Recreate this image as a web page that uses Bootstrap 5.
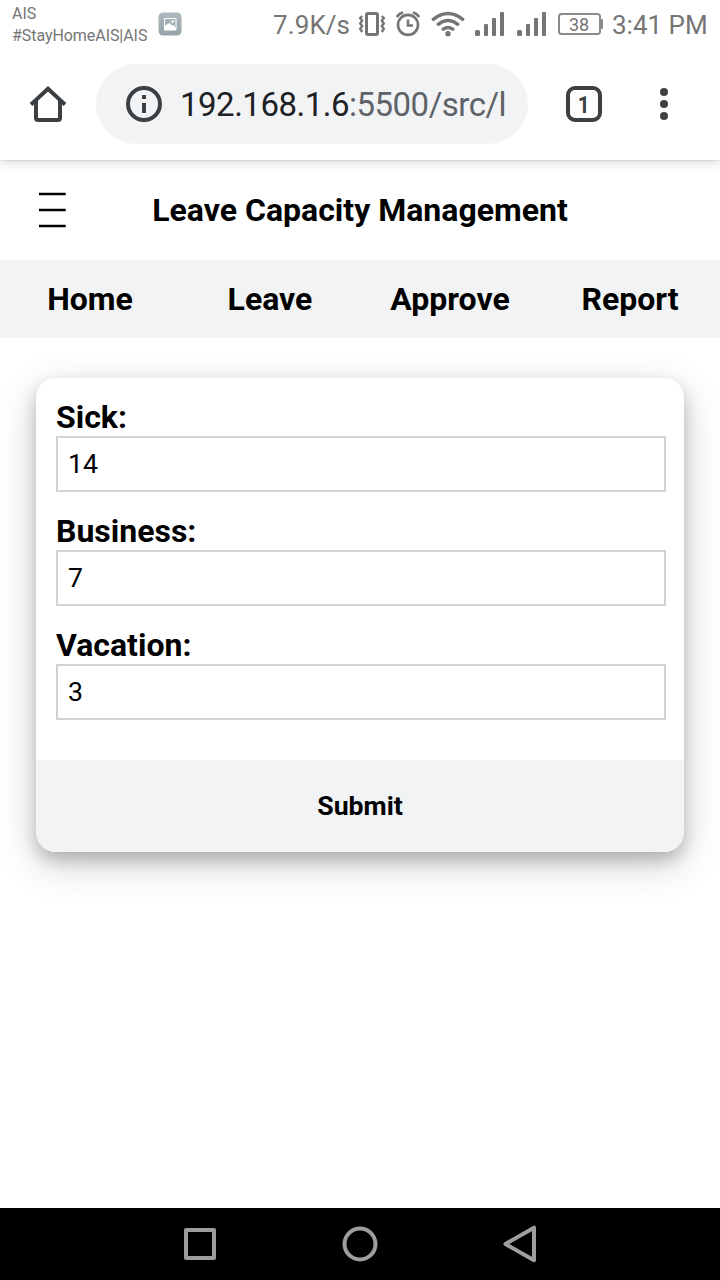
<!DOCTYPE html>
<html lang="en">
<head>
<meta charset="utf-8">
<meta name="viewport" content="width=device-width, initial-scale=1">
<title>Leave Capacity Management</title>
<link href="https://cdn.jsdelivr.net/npm/bootstrap@5.3.0/dist/css/bootstrap.min.css" rel="stylesheet">
<style>
body{font-family:Roboto,"Noto Sans",sans-serif;color:#000;background:#fff;height:1280px;overflow:hidden}
svg{display:block;flex:none}
.status{height:48px;color:#757575}
.carrier{width:146px;padding-left:12px;font-size:16px;letter-spacing:-.06px;line-height:22px;padding-top:3px;white-space:nowrap}
.speed{width:77px;margin-left:91px;font-size:26px;letter-spacing:.1px;line-height:50px;white-space:nowrap}
.clock{font-size:26px;line-height:50px;margin-left:8px;white-space:nowrap}
.toolbar{height:112px;box-shadow:0 1px 12px rgba(0,0,0,.2),0 0 2px rgba(0,0,0,.2);z-index:2;background:#fff;color:#3c4043}
.toolbar-top{z-index:3;background:#fff}
.address{width:432px;height:80px;background:#f1f3f4;font-size:33px;letter-spacing:-.5px;color:#5f6368;padding-left:30px}
.address b{font-weight:400;color:#202124}
.address span{margin-left:18px;width:330px;white-space:nowrap;overflow:hidden;line-height:48px;padding-top:2px}
.tabs{width:36px;height:36px;border:4px solid #3c4043;border-radius:9px;font-size:23px;font-weight:700;line-height:1;padding-top:2px}
.tabs span{transform:scaleX(.9)}
.title-row{height:100px;padding-left:38px}
.title-row h1{font-size:32px;font-weight:700;left:0;right:0}
.menu-row{height:78px;background:#f1f3f4;font-size:32px;font-weight:700}
.menu-row a{color:#000}
.panel{margin:40px 36px 0;height:474px;border-radius:20px;background:#fff;box-shadow:0 8px 16px rgba(0,0,0,.2),0 12px 40px rgba(0,0,0,.19)}
.fields{height:382px;padding:20px 18px 0 20px}
.fields label{display:block;font-size:32px;font-weight:700;line-height:38px}
.fields input{display:block;width:100%;height:56px;border:2px solid #d3d3d3;padding:0 10px;font-size:26.67px;color:#000;margin-bottom:20px;outline:0;background:#fff;border-radius:0}
.submit{height:92px;border:0;background:#f1f3f4;font-size:26.67px;font-weight:700;color:#000}
.softkeys{height:72px;background:#000;padding:0 120px}
</style>
</head>
<body class="d-flex flex-column">
<div class="toolbar-top status d-flex position-relative">
  <div class="carrier"><div>AIS</div><div>#StayHomeAIS|AIS</div></div>
  <svg width="24" height="24" viewBox="0 0 24 24" style="margin:12px 0 0 12px"><defs><linearGradient id="g" x2="0" y2="1"><stop stop-color="#aeb8be"/><stop offset="1" stop-color="#98a3aa"/></linearGradient></defs><rect x=".5" y=".5" width="23" height="23" rx="4.5" fill="url(#g)"/><path d="M6.500 6.500h11.500v11.500H6.500z" fill="none" stroke="#fff" stroke-width="1"/><path d="M6.500 14l2.500-1.500 2.500-1.500 2.500 2.500 1.500-.5 2.500 3v2h-11.500z" fill="#fff"/><path d="M14.700 8v3.200M13.100 9.600h3.200" stroke="#fff"/></svg>
  <div class="speed">7.9K/s</div>
  <svg width="28" height="48" viewBox="0 0 28 48" fill="none" stroke="#757575" style="margin-left:8px"><rect x="8.500" y="13.500" width="11" height="21" rx="1.500" stroke-width="3"/><path d="M4.200 16l-2 2 2 2.700-2 2.700 2 2.700-2 2.700 2 3.200M23.800 16l2 2-2 2.700 2 2.700-2 2.700 2 2.700-2 3.200" stroke-width="2.400"/></svg>
  <svg width="26" height="48" viewBox="0 0 26 48" fill="none" stroke="#757575" stroke-width="2.600" style="margin-left:9px"><circle cx="13" cy="24.900" r="10"/><path d="M13 19.500V25.500h5M1.800 17q2-3.500 6.200-4.800M24.200 17q-2-3.500-6.200-4.800"/></svg>
  <svg width="34" height="48" viewBox="0 0 34 48" fill="none" stroke="#757575" stroke-width="3.400" stroke-linecap="round" style="margin-left:10px"><path d="M2.300 19.300q14.700-11.800 29.400 0M7.300 24.300q9.700-7.600 19.400 0M12.200 29.200q4.800-3.400 9.600 0"/><circle cx="17" cy="33.800" r="2.700" fill="#757575" stroke="none"/></svg>
  <svg width="30" height="48" viewBox="0 0 30 48" fill="#757575" style="margin-left:10px"><rect y="30" width="5" height="6" rx="1.500"/><rect x="9" y="24" width="4" height="12" rx="1"/><rect x="17" y="18" width="4" height="18" rx="1"/><rect x="25" y="12" width="4" height="24" rx="1"/></svg>
  <svg width="30" height="48" viewBox="0 0 30 48" fill="#757575" style="margin-left:12px"><rect y="30" width="5" height="6" rx="1.500"/><rect x="9" y="24" width="4" height="12" rx="1"/><rect x="17" y="18" width="4" height="18" rx="1"/><rect x="25" y="12" width="4" height="24" rx="1"/></svg>
  <svg width="46" height="48" viewBox="0 0 46 48" style="margin-left:11px"><rect x="1" y="14" width="41" height="20" rx="2.500" fill="none" stroke="#8b8b8b" stroke-width="2"/><path d="M43 19h2v10h-2z" fill="#8b8b8b"/><text x="21" y="31" text-anchor="middle" font-size="18" fill="#757575">38</text></svg>
  <div class="clock">3:41 PM</div>
</div>
<div class="toolbar d-flex align-items-center position-relative">
  <svg width="36" height="36" viewBox="0 0 36 36" fill="none" stroke="#3c4043" stroke-width="4" style="margin-left:30px"><path d="M1 18.500L18 2.800l17 15.700M6 15v17q0 2 2 2h20q2 0 2-2V15"/></svg>
  <div class="address rounded-pill d-flex align-items-center" style="margin-left:30px">
    <svg width="36" height="36" viewBox="0 0 36 36"><circle cx="18" cy="18" r="16" fill="none" stroke="#3c4043" stroke-width="4"/><path d="M16 9h4v4h-4zM16 17h4v10h-4z" fill="#3c4043"/></svg>
    <span><b>192.168.1.6</b>:5500/src/l</span>
  </div>
  <div class="tabs d-flex align-items-center justify-content-center" style="margin-left:38px"><span>1</span></div>
  <svg width="8" height="36" viewBox="0 0 8 36" fill="#3c4043" style="margin-left:58px"><circle cx="4" cy="6" r="4"/><circle cx="4" cy="18" r="4"/><circle cx="4" cy="30" r="4"/></svg>
</div>
<header class="title-row d-flex align-items-center position-relative">
  <svg width="28" height="36" viewBox="0 0 28 36"><path d="M1 2h26.700M1 18h26.700M1 34h26.700" stroke="#000" stroke-width="2.500"/></svg>
  <h1 class="position-absolute text-center m-0">Leave Capacity Management</h1>
</header>
<nav class="menu-row d-flex align-items-center text-center">
  <a class="col-3 text-decoration-none">Home</a><a class="col-3 text-decoration-none">Leave</a><a class="col-3 text-decoration-none">Approve</a><a class="col-3 text-decoration-none">Report</a>
</nav>
<main class="flex-grow-1">
  <form class="panel overflow-hidden">
    <div class="fields">
      <label for="sick">Sick:</label><input id="sick" value="14">
      <label for="business">Business:</label><input id="business" value="7">
      <label for="vacation">Vacation:</label><input id="vacation" value="3">
    </div>
    <button type="button" class="submit w-100 d-block">Submit</button>
  </form>
</main>
<footer class="softkeys d-flex align-items-center">
  <svg class="w-100" height="72" viewBox="0 0 480 72" fill="none" stroke="#9e9e9e" stroke-width="4" stroke-linejoin="round"><path d="M66 22h28v28H66z"/><circle cx="240" cy="36" r="15.500"/><path d="M414 19.700v32.600L385.500 36z"/></svg>
</footer>
<script src="https://cdn.jsdelivr.net/npm/bootstrap@5.3.0/dist/js/bootstrap.bundle.min.js"></script>
</body>
</html>
